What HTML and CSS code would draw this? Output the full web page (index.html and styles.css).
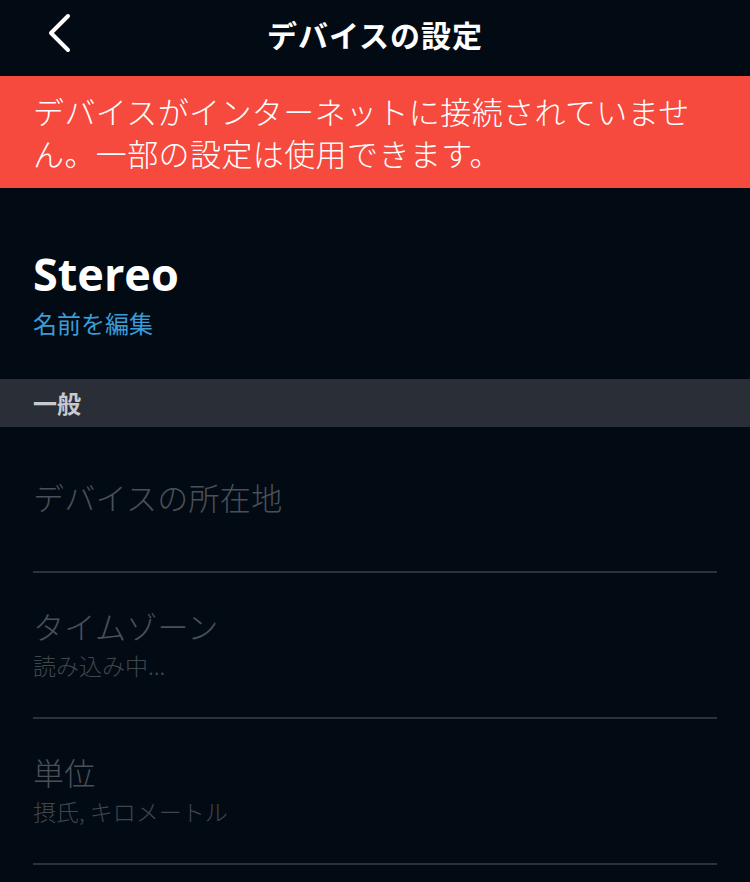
FILE: index.html
```html
<!DOCTYPE html>
<html lang="ja">
<head>
    <meta charset="UTF-8">
    <meta name="viewport" content="width=device-width, initial-scale=1.0">
    <title>デバイスの設定</title>
    <link rel="stylesheet" href="styles.css">
</head>
<body>
    <div class="header">
        <button class="back-button" aria-label="戻る">
            <svg width="26" height="40" viewBox="0 0 26 40">
                <path d="M22 3 L5 20 L22 37" fill="none" stroke="#fff" stroke-width="4" stroke-linecap="round" stroke-linejoin="round"/>
            </svg>
        </button>
        <h1>デバイスの設定</h1>
    </div>
    <div class="alert">デバイスがインターネットに接続されていません。一部の設定は使用できます。</div>
    <div class="device">
        <div class="device-name">Stereo</div>
        <a class="edit-link" href="#">名前を編集</a>
    </div>
    <div class="section-title">一般</div>
    <div class="list">
        <div class="row">
            <div class="row-title">デバイスの所在地</div>
        </div>
        <div class="row">
            <div class="row-title">タイムゾーン</div>
            <div class="row-sub">読み込み中...</div>
        </div>
        <div class="row">
            <div class="row-title">単位</div>
            <div class="row-sub">摂氏, キロメートル</div>
        </div>
    </div>
</body>
</html>
```

FILE: styles.css
```css
body {
    font-family: 'Noto Sans CJK JP', 'Noto Sans', sans-serif;
    background-color: #020b14;
    color: #fff;
    margin: 0;
    padding: 0;
    width: 750px;
    height: 882px;
    overflow: hidden;
}
.header {
    height: 76px;
    display: flex;
    align-items: center;
    justify-content: center;
    position: relative;
}
.back-button {
    position: absolute;
    left: 46px;
    top: 13px;
    background: none;
    border: none;
    padding: 0;
    cursor: pointer;
}
.header h1 {
    margin: 0;
    font-size: 30px;
    letter-spacing: 1px;
    font-weight: bold;
    padding-bottom: 8px;
}
.alert {
    background-color: #f64a3e;
    color: #fff;
    font-size: 31px;
    line-height: 42px;
    letter-spacing: 0.4px;
    padding: 14px 28px 14px 33px;
    font-weight: 300;
}
.device {
    padding: 56px 33px 0;
    box-sizing: border-box;
    height: 191px;
}
.device-name {
    font-family: 'Open Sans', sans-serif;
    font-size: 45px;
    font-weight: bold;
    line-height: 60px;
}
.edit-link {
    display: block;
    color: #3b9bd6;
    font-size: 24px;
    line-height: 34px;
    text-decoration: none;
    margin-top: 2px;
}
.section-title {
    background-color: #2a2e36;
    color: #c8cacd;
    font-size: 24px;
    font-weight: bold;
    height: 48px;
    line-height: 48px;
    padding: 0 33px;
}
.list {
    padding: 0 33px;
}
.row {
    height: 146px;
    box-sizing: border-box;
    border-bottom: 2px solid #2c323a;
    padding-top: 33px;
}
.row:first-child {
    height: 146px;
    padding-top: 50px;
}
.row-title {
    color: #4a5058;
    font-size: 31px;
    line-height: 40px;
    letter-spacing: 0.3px;
    font-weight: 300;
}
.row-sub {
    color: #40464e;
    font-size: 23px;
    line-height: 38px;
    font-weight: 300;
}
```
